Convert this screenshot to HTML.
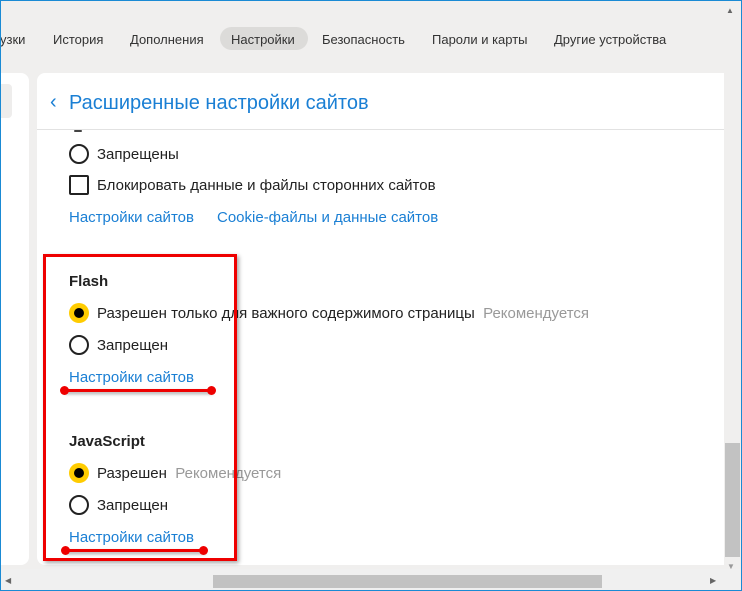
<!DOCTYPE html>
<html><head><meta charset="utf-8"><style>
*{margin:0;padding:0;box-sizing:border-box}
body{width:742px;height:591px;overflow:hidden;background:#f0efee;font-family:"Liberation Sans",sans-serif;position:relative;color:#222}
.frame{position:absolute;left:0;top:0;width:742px;height:591px;border:1px solid #1a8ad4;pointer-events:none;z-index:10}
.t{position:absolute;white-space:nowrap;font-size:15px;line-height:18px}
.nav{top:31px;font-size:13px;color:#333}
.pill{position:absolute;left:220px;top:27px;width:88px;height:23px;border-radius:12px;background:#dcdbd9}
.card{position:absolute;left:37px;top:73px;width:687px;height:492px;background:#fff;border-radius:8px 0 0 8px}
.left{position:absolute;left:0;top:73px;width:29px;height:492px;background:#fff;border-radius:0 8px 8px 0}
.lg{position:absolute;left:0;top:84px;width:12px;height:34px;background:#eeedec;border-radius:0 4px 4px 0}
.hr{position:absolute;left:37px;top:129px;width:687px;height:1px;background:#e2e2e2}
.r{position:absolute;width:20px;height:20px;border:2px solid #222;border-radius:50%;background:#fff}
.ry{position:absolute;width:20px;height:20px;border-radius:50%;background:#fc0}
.ry:after{content:"";position:absolute;left:5px;top:5px;width:10px;height:10px;border-radius:50%;background:#000}
.link{color:#1a7fd4}
.gray{color:#999}
.b{font-weight:bold}
.red{position:absolute;border:3px solid #e00;box-shadow:2px 2px 4px rgba(0,0,0,.35)}
.rl{position:absolute;height:3px;background:#e00;box-shadow:1px 2px 3px rgba(0,0,0,.35)}
.dot{position:absolute;width:9px;height:9px;border-radius:50%;background:#e00}
</style></head><body>
<div class="frame"></div>
<div class="pill"></div>
<div class="t nav" style="left:0">узки</div>
<div class="t nav" style="left:53px">История</div>
<div class="t nav" style="left:130px">Дополнения</div>
<div class="t nav" style="left:231px">Настройки</div>
<div class="t nav" style="left:322px">Безопасность</div>
<div class="t nav" style="left:432px">Пароли и карты</div>
<div class="t nav" style="left:554px">Другие устройства</div>
<div style="position:absolute;left:726px;top:6px;font-size:8px;color:#666">▲</div>
<div class="left"></div><div class="lg"></div>
<div class="card"></div>
<div class="t link" style="left:50px;top:90px;font-size:20px;line-height:24px">‹</div>
<div class="t link" style="left:69px;top:91px;font-size:20px;line-height:24px">Расширенные настройки сайтов</div>
<div style="position:absolute;left:74px;top:130px;width:8px;height:2px;background:#444;border-radius:2px"></div>
<div class="hr"></div>
<div class="r" style="left:69px;top:144px"></div><div class="t" style="left:97px;top:146px">Запрещены</div>
<div style="position:absolute;left:69px;top:175px;width:20px;height:20px;border:2px solid #222;border-radius:2px"></div>
<div class="t" style="left:97px;top:177px">Блокировать данные и файлы сторонних сайтов</div>
<div class="t link" style="left:69px;top:209px">Настройки сайтов</div>
<div class="t link" style="left:217px;top:209px">Cookie-файлы и данные сайтов</div>
<div class="t b" style="left:69px;top:273px">Flash</div>
<div class="ry" style="left:69px;top:303px"></div><div class="t" style="left:97px;top:305px">Разрешен только для важного содержимого страницы <span class="gray">&nbsp;Рекомендуется</span></div>
<div class="r" style="left:69px;top:335px"></div><div class="t" style="left:97px;top:337px">Запрещен</div>
<div class="t link" style="left:69px;top:369px">Настройки сайтов</div>
<div class="t b" style="left:69px;top:433px">JavaScript</div>
<div class="ry" style="left:69px;top:463px"></div><div class="t" style="left:97px;top:465px">Разрешен &nbsp;<span class="gray">Рекомендуется</span></div>
<div class="r" style="left:69px;top:495px"></div><div class="t" style="left:97px;top:497px">Запрещен</div>
<div class="t link" style="left:69px;top:529px">Настройки сайтов</div>
<div class="red" style="left:43px;top:254px;width:194px;height:307px"></div>
<div class="rl" style="left:64px;top:389px;width:148px"></div>
<div class="dot" style="left:60px;top:386px"></div><div class="dot" style="left:207px;top:386px"></div>
<div class="rl" style="left:65px;top:549px;width:140px"></div>
<div class="dot" style="left:61px;top:546px"></div><div class="dot" style="left:199px;top:546px"></div>
<div style="position:absolute;left:725px;top:443px;width:15px;height:114px;background:#c2c2c2"></div>
<div style="position:absolute;left:727px;top:562px;font-size:8px;color:#999">▼</div>
<div style="position:absolute;left:0;top:569px;width:742px;height:22px;background:#f0f0f0"></div>
<div style="position:absolute;left:213px;top:575px;width:389px;height:13px;background:#c2c2c2"></div>
<div style="position:absolute;left:5px;top:576px;font-size:8px;color:#666">◀</div>
<div style="position:absolute;left:710px;top:576px;font-size:8px;color:#666">▶</div>
</body></html>
